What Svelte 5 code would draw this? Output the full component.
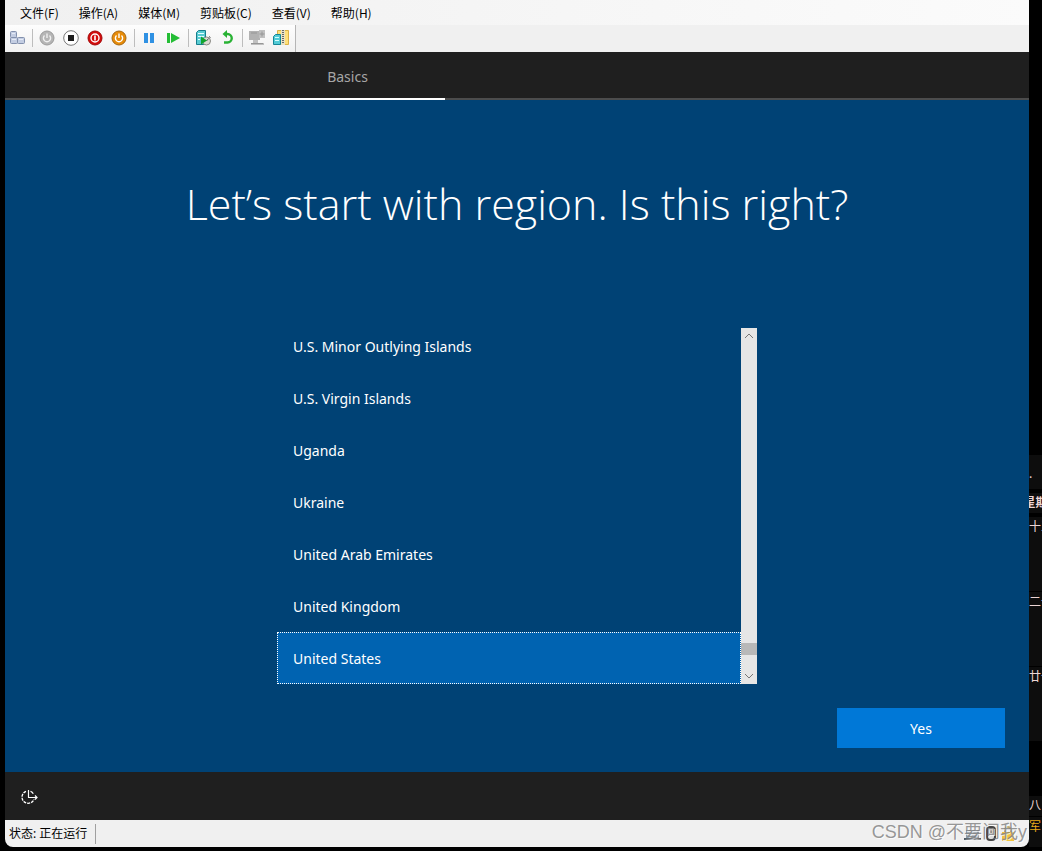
<script lang="ts">
	const menus = ['文件(F)', '操作(A)', '媒体(M)', '剪贴板(C)', '查看(V)', '帮助(H)'];

	const toolGroups = [
		['keys'],
		['start', 'stop', 'shutdown', 'save'],
		['pause', 'reset'],
		['checkpoint', 'revert'],
		['enhanced', 'share']
	];

	const regions = [
		'U.S. Minor Outlying Islands',
		'U.S. Virgin Islands',
		'Uganda',
		'Ukraine',
		'United Arab Emirates',
		'United Kingdom',
		'United States'
	];

	let selected = $state('United States');
</script>

<div class="desktop">
	<div class="window">
		<nav class="menu-bar">
			{#each menus as menu}
				<button class="menu">{menu}</button>
			{/each}
		</nav>

		<div class="toolbar">
			<div class="tools">
				{#each toolGroups as group, i}
					{#if i > 0}
						<span class="separator"></span>
					{/if}
					{#each group as tool}
						<button class="tool" aria-label={tool}>
							<svg width="18" height="18" viewBox="0 0 18 18">
								{#if tool === 'keys'}
									<g fill="#c3cde2" stroke="#8290ad">
										<rect x="2.5" y="2.5" width="6" height="6" rx="1" />
										<rect x="2.5" y="8.5" width="7" height="6" rx="1" />
										<rect x="9.5" y="8.5" width="7" height="6" rx="1" />
									</g>
									<path d="M4 4.5h3M4 10.5h4M11 10.5h4" stroke="#e4eaf6" />
								{:else if tool === 'start'}
									<circle cx="9" cy="9" r="7" fill="#b5b5b5" stroke="#9c9c9c" />
									<path d="M6.500 6.500a3.600 3.600 0 1 0 5 0M9 4.500v4.500" fill="none" stroke="#f0f0f0" stroke-width="1.400" />
								{:else if tool === 'stop'}
									<circle cx="9" cy="9" r="7.300" fill="#fff" stroke="#777" />
									<rect x="6" y="6" width="6" height="6" fill="#1c1c1c" />
								{:else if tool === 'shutdown'}
									<circle cx="9" cy="9" r="7" fill="#d30b0b" stroke="#a10707" />
									<circle cx="9" cy="9" r="4" fill="none" stroke="#fff" stroke-width="1.400" />
									<path d="M9 6.500v5" stroke="#fff" stroke-width="1.600" />
								{:else if tool === 'save'}
									<circle cx="9" cy="9" r="7" fill="#e78b08" stroke="#a56610" />
									<path d="M6.500 6.500a3.600 3.600 0 1 0 5 0M9 4.500v4.500" fill="none" stroke="#fff" stroke-width="1.400" />
								{:else if tool === 'pause'}
									<path d="M4 4h4v10H4zM10 4h4v10h-4z" fill="#2f91e3" />
								{:else if tool === 'reset'}
									<path d="M3 4h3v10H3zM7 4l9 5-9 5z" fill="#24bd35" />
								{:else if tool === 'checkpoint'}
									<path d="M2.500 3.500l2-2h7v14h-9z" fill="#58cbd2" stroke="#177d8c" />
									<path d="M4 4.500h6M4 7.500h6M4 10.500h2" stroke="#e6ffff" />
									<circle cx="12.500" cy="12" r="4" fill="#dcdcd4" stroke="#8a8a84" />
									<path d="M12.500 12l2-2.500M15 7.500l1.500 1" stroke="#555" />
									<path d="M7 7.500l6 4-6 4z" fill="#12a52e" />
								{:else if tool === 'revert'}
									<path d="M7 5h2.500a4.200 4.200 0 0 1 0 8.500H6" fill="none" stroke="#29b234" stroke-width="2.400" />
									<path d="M9 1v8L4.500 5z" fill="#29b234" />
								{:else if tool === 'enhanced'}
									<path d="M1 2h11v9H1z" fill="#b2b2b2" />
									<path d="M11 1h6v8h-6zM5 11h5v3H5zM3 14h13v2H3z" fill="#c0c0c0" />
									<path d="M14 2.500v5M11.500 5h5M3 4h6M3 14.500h12" stroke="#969696" />
								{:else}
									<path d="M5.500 1.500h11v14h-11z" fill="#ffe07a" stroke="#dbb144" />
									<path d="M9 1h4v15H9z" fill="#e9e2c4" />
									<path d="M11 1v14" stroke="#666" stroke-width="2" stroke-dasharray="1 1" />
									<path d="M1.500 7.500l2-2h5v10h-7z" fill="#52cbd6" stroke="#168697" />
									<path d="M3 8.500h4M3 11.500h4" stroke="#d7ffff" />
								{/if}
							</svg>
						</button>
					{/each}
				{/each}
			</div>
		</div>

		<header class="steps">
			<span class="step">Basics</span>
		</header>

		<main class="setup">
			<h1>Let’s start with region. Is this right?</h1>

			<div class="picker">
				<ul class="regions" role="listbox" aria-label="Region">
					{#each regions as region}
						<!-- svelte-ignore a11y_click_events_have_key_events -->
						<li
							class="region"
							class:selected={region === selected}
							role="option"
							tabindex="-1"
							aria-selected={region === selected}
							onclick={() => (selected = region)}
						>
							{region}
						</li>
					{/each}
				</ul>
				<div class="scrollbar">
					<button class="arrow" aria-label="Scroll up">
						<svg width="10" height="6" viewBox="0 0 10 6"><path d="M1 5l4-4 4 4" /></svg>
					</button>
					<div class="track"><div class="thumb"></div></div>
					<button class="arrow" aria-label="Scroll down">
						<svg width="10" height="6" viewBox="0 0 10 6"><path d="M1 1l4 4 4-4" /></svg>
					</button>
				</div>
			</div>

			<button class="confirm">Yes</button>
		</main>

		<footer class="access">
			<button class="ease" aria-label="Ease of Access">
				<svg width="18" height="18" viewBox="0 0 18 18" fill="none" stroke="#fff">
					<path d="M6 4.300a6.200 6.200 0 1 0 8 8" stroke-width="1.300" stroke-dasharray="3 1" />
					<path d="M10.500 4.300a6 6 0 0 1 2.800 2.500" stroke-width="1.200" />
					<path d="M8.500 3v7.500M8 10.500h9M15 8.500l2 2-2 2" stroke-width="1.200" />
				</svg>
			</button>
		</footer>

		<div class="status-bar">
			<span class="status">状态: 正在运行</span>
			<svg class="indicators" width="60" height="20" viewBox="0 0 60 20">
				<path d="M4 6h13v8H4z" fill="#8c9aa8" />
				<path d="M2 14h17v2H2z" fill="#4d5963" />
				<path d="M5 8h10M5 11h10" stroke="#dce4eb" />
				<rect x="25" y="3" width="8" height="13" rx="3" fill="#ddd" stroke="#444" stroke-width="2" />
				<path d="M29 4v5" stroke="#444" />
				<path d="M43 8V5q3-4 6 0v3" fill="none" stroke="#b9a772" stroke-width="2" />
				<path d="M40 8h12v9H40z" fill="#f3c33c" />
			</svg>
		</div>
	</div>

	<!-- Sliver of the desktop calendar behind the window -->
	<aside class="calendar">
		<div class="cell title">.</div>
		<div class="cell weekday"><span>星期</span></div>
		<div class="cell">十五</div>
		<div class="cell">二十</div>
		<div class="cell">廿十</div>
		<div class="cell last">八</div>
		<div class="cell holiday">军</div>
	</aside>

	<div class="watermark">CSDN @不要问我y</div>
</div>

<style>
	:global(body) {
		margin: 0;
		background: #000;
	}

	.desktop {
		position: relative;
		display: flex;
		box-sizing: border-box;
		min-height: 100vh;
		padding: 0 0 4px 5px;
		overflow: hidden;
		background: #000;
		font-family: 'Noto Sans', 'Noto Sans CJK SC', sans-serif;
	}

	button {
		margin: 0;
		padding: 0;
		border: 0;
		background: none;
		font: inherit;
		color: inherit;
	}

	.window {
		flex: 1;
		display: flex;
		flex-direction: column;
		min-width: 0;
		border-radius: 0 0 8px 8px;
		overflow: hidden;
		background: #f0f0f0;
	}

	.menu-bar {
		display: flex;
		height: 25px;
		padding-left: 5px;
		background: linear-gradient(90deg, #f0f0f0, #fbfbfb);
		font-family: 'Noto Sans CJK SC', sans-serif;
		font-size: 12px;
		color: #000;
	}

	.menu {
		padding: 0 10px;
		white-space: nowrap;
	}

	.toolbar {
		display: flex;
		height: 27px;
		background: #f0f0f0;
	}

	.tools {
		display: flex;
		align-items: center;
		padding: 0 2px 1px 0;
		border-right: 1px solid #b5b5b5;
		background: linear-gradient(#fdfdfd, #f1f1f1);
	}

	.tool {
		display: flex;
		align-items: center;
		justify-content: center;
		width: 24px;
		height: 24px;
	}

	.separator {
		width: 1px;
		height: 18px;
		margin: 0 2px 0 3px;
		background: #bdbdbd;
	}

	.steps {
		display: flex;
		box-sizing: border-box;
		height: 48px;
		padding-left: 245px;
		background: #1f1f1f;
		box-shadow: inset 0 -2px #4c4c4c;
	}

	.step {
		box-sizing: border-box;
		width: 195px;
		border-bottom: 2px solid #fff;
		line-height: 50px;
		text-align: center;
		font-size: 14px;
		color: #a6a6a6;
	}

	.setup {
		flex: 1;
		display: flex;
		flex-direction: column;
		align-items: center;
		padding: 74px 24px 24px;
		background: #004275;
		color: #fff;
	}

	h1 {
		margin: 0 0 94px;
		font-family: 'Open Sans', sans-serif;
		font-size: 43px;
		font-weight: 300;
		line-height: 60px;
		text-align: center;
	}

	.picker {
		display: flex;
		width: 480px;
		max-width: 100%;
		height: 356px;
	}

	.regions {
		flex: 1;
		display: flex;
		flex-direction: column;
		justify-content: flex-end;
		margin: 0;
		padding: 0;
		overflow: hidden;
		list-style: none;
	}

	.region {
		flex: none;
		box-sizing: border-box;
		height: 52px;
		padding: 0 15px;
		border: 1px solid transparent;
		line-height: 52px;
		font-size: 14px;
	}

	.region.selected {
		border: 1px dotted #fff;
		background: #0063b1;
	}

	.scrollbar {
		display: flex;
		flex-direction: column;
		width: 16px;
		background: #e6e6e6;
	}

	.arrow {
		display: flex;
		align-items: center;
		justify-content: center;
		height: 16px;
	}

	.arrow path {
		fill: none;
		stroke: #777;
	}

	.track {
		flex: 1;
		display: flex;
		flex-direction: column;
		justify-content: flex-end;
		padding-bottom: 13px;
	}

	.thumb {
		height: 12px;
		background: #b8b8b8;
	}

	.confirm {
		align-self: flex-end;
		width: 168px;
		height: 40px;
		margin-top: 24px;
		background: #0078d7;
		font-size: 14px;
	}

	.access {
		display: flex;
		align-items: center;
		height: 48px;
		padding: 0 15px;
		background: #1f1f1f;
	}

	.ease {
		display: flex;
	}

	.status-bar {
		display: flex;
		align-items: center;
		justify-content: space-between;
		height: 27px;
		padding: 0 7px 0 4px;
		font-size: 12px;
		color: #000;
	}

	.status {
		padding-right: 8px;
		border-right: 1px solid #a0a0a0;
		line-height: 20px;
	}

	.calendar {
		display: flex;
		flex-direction: column;
		gap: 1px;
		width: 13px;
		padding-top: 455px;
		overflow: hidden;
		font-family: 'Noto Sans CJK SC', sans-serif;
		font-size: 12px;
		color: #ecd5d5;
	}

	.cell {
		flex: none;
		height: 74px;
		overflow: hidden;
		background: #0d0d0d;
		line-height: 18px;
		white-space: nowrap;
	}

	.cell.title {
		height: 34px;
		margin-bottom: 3px;
		line-height: 36px;
	}

	.cell.weekday {
		display: flex;
		justify-content: center;
		height: 20px;
		margin-bottom: 3px;
		font-weight: 700;
	}

	.cell.last {
		height: 20px;
		margin-top: 54px;
	}

	.cell.holiday {
		height: 30px;
		color: #e5a91b;
	}

	.watermark {
		position: absolute;
		right: 15px;
		bottom: 7px;
		font-family: 'Liberation Sans', 'Noto Sans CJK SC', sans-serif;
		font-size: 18px;
		line-height: 24px;
		color: rgba(125, 125, 125, 0.8);
		text-shadow: 1px 1px rgba(255, 255, 255, 0.7);
	}
</style>
